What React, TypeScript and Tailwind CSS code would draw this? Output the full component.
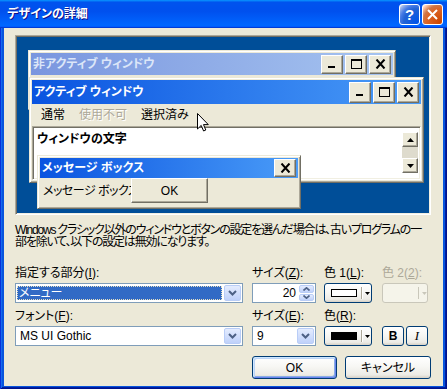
const FONT = "[font-family:'Liberation_Sans','Noto_Sans_CJK_JP',sans-serif] [font-feature-settings:'palt']";

// classic 3d edges used inside the preview
const raised =
  "bg-[#ECE9D8] border border-t-white border-l-white border-r-[#716F64] border-b-[#716F64] shadow-[inset_-1px_-1px_#ACA899]";
const frame =
  "bg-[#ECE9D8] p-[2px] border border-t-[#ECE9D8] border-l-[#ECE9D8] border-r-[#716F64] border-b-[#716F64] shadow-[inset_1px_1px_#FFFFFF,inset_-1px_-1px_#ACA899]";
const sunken =
  "border border-t-[#ACA899] border-l-[#ACA899] border-r-white border-b-white shadow-[inset_1px_1px_#716F64,inset_-1px_-1px_#F1EFE2]";

// luna controls
const xpButton =
  "rounded-[3px] border border-[#003C74] bg-[linear-gradient(to_bottom,#FFFFFF_0%,#F7F7F4_45%,#ECEBE6_85%,#D6D0C5_100%)]";
const xpDefault =
  "shadow-[inset_1px_1px_#CEE7FF,inset_-1px_-1px_#6982EE,inset_2px_2px_#BCD4F6,inset_-2px_-2px_#89ADE4]";

const MinGlyph = () => (
  <svg width="11" height="10" viewBox="0 0 11 10">
    <rect x="1" y="7" width="7" height="2" fill="#000" />
  </svg>
);

const MaxGlyph = () => (
  <svg width="11" height="10" viewBox="0 0 11 10">
    <rect x="0.5" y="0.5" width="10" height="9" fill="none" stroke="#000" />
    <rect x="0" y="0" width="11" height="2" fill="#000" />
  </svg>
);

const CloseGlyph = () => (
  <svg width="11" height="10" viewBox="0 0 11 10">
    <path d="M1.5 0.5 L9.5 9.5 M9.5 0.5 L1.5 9.5" stroke="#000" strokeWidth="2" />
  </svg>
);

const ArrowUp = () => (
  <svg width="7" height="4" viewBox="0 0 7 4">
    <path d="M3.5 0 L7 4 L0 4 Z" fill="#000" />
  </svg>
);

const ArrowDown = () => (
  <svg width="7" height="4" viewBox="0 0 7 4">
    <path d="M0 0 L7 0 L3.5 4 Z" fill="#000" />
  </svg>
);

const Chevron = ({ up = false, small = false }: { up?: boolean; small?: boolean }) =>
  small ? (
    <svg width="7" height="4" viewBox="0 0 7 4">
      <path d={up ? "M0.5 3.5 L3.5 0.8 L6.5 3.5" : "M0.5 0.5 L3.5 3.2 L6.5 0.5"} stroke="#4D6185" strokeWidth="1.6" fill="none" />
    </svg>
  ) : (
    <svg width="9" height="6" viewBox="0 0 9 6">
      <path d="M1 1 L4.5 4.5 L8 1" stroke="#4D6185" strokeWidth="2" fill="none" />
    </svg>
  );

const DropButton = () => (
  <div className="w-[17px] rounded-[2px] border border-[#B9CDF7] bg-[linear-gradient(to_bottom,#E4ECFE,#BFD1FA)] flex items-center justify-center">
    <Chevron />
  </div>
);

const ColorButton = ({ swatch, disabled = false }: { swatch?: string; disabled?: boolean }) =>
  disabled ? (
    <div className="h-[20px] rounded-[3px] border border-[#C9C7BA] bg-[#F5F4EA] flex items-center pl-[6px]">
      <div className="w-[26px]" />
      <div className="ml-[4px] h-[12px] w-px bg-[#C9C7BA]" />
      <svg className="ml-[3px]" width="5" height="3" viewBox="0 0 5 3">
        <path d="M0 0 L5 0 L2.5 3 Z" fill="#C9C7BA" />
      </svg>
    </div>
  ) : (
    <div className={`h-[20px] ${xpButton} flex items-center pl-[6px]`}>
      <div className={`w-[26px] h-[8px] border border-black ${swatch}`} />
      <div className="ml-[4px] h-[12px] w-px bg-[#ACA899] shadow-[1px_0_white]" />
      <svg className="ml-[3px]" width="5" height="3" viewBox="0 0 5 3">
        <path d="M0 0 L5 0 L2.5 3 Z" fill="#000" />
      </svg>
    </div>
  );

const Cursor = () => (
  <svg width="12" height="19" viewBox="0 0 12 19">
    <path
      d="M0.5 0.5 L0.5 16 L4.2 12.4 L6.6 18 L8.8 17 L6.5 11.6 L11.3 11.6 Z"
      fill="#fff"
      stroke="#000"
      strokeWidth="1"
      strokeLinejoin="miter"
    />
  </svg>
);

const Preview = () => (
  <div className={`relative h-[180px] shrink-0 overflow-hidden bg-[#004E98] ${sunken}`}>
    {/* inactive window */}
    <div className={`absolute left-[12px] top-[14px] w-[368px] h-[60px] ${frame}`}>
      <div className="h-[22px] flex items-center px-[2px] bg-[linear-gradient(to_right,#7A96DF,#A6C4F0)]">
        <span className="font-bold text-[#DCE6F8]">非アクティブ ウィンドウ</span>
        <div className="ml-auto flex gap-[2px]">
          <div className={`w-[22px] h-[19px] flex items-center justify-center ${raised}`}>
            <MinGlyph />
          </div>
          <div className={`w-[22px] h-[19px] flex items-center justify-center ${raised}`}>
            <MaxGlyph />
          </div>
          <div className={`w-[22px] h-[19px] flex items-center justify-center ${raised}`}>
            <CloseGlyph />
          </div>
        </div>
      </div>
    </div>

    {/* active window */}
    <div className={`absolute left-[13px] top-[41px] w-[395px] h-[106px] flex flex-col ${frame}`}>
      <div className="h-[24px] shrink-0 flex items-center px-[2px] bg-[linear-gradient(to_right,#0A54E0,#4A9CF8)]">
        <span className="font-bold text-white">アクティブ ウィンドウ</span>
        <div className="ml-auto flex gap-[2px]">
          <div className={`w-[22px] h-[21px] flex items-center justify-center ${raised}`}>
            <MinGlyph />
          </div>
          <div className={`w-[22px] h-[21px] flex items-center justify-center ${raised}`}>
            <MaxGlyph />
          </div>
          <div className={`w-[22px] h-[21px] flex items-center justify-center ${raised}`}>
            <CloseGlyph />
          </div>
        </div>
      </div>
      <div className="h-[22px] shrink-0 flex items-center pl-[2px]">
        <span className="px-[7px]">通常</span>
        <span className="px-[7px] text-[#ACA899] [text-shadow:1px_1px_#FFFFFF]">使用不可</span>
        <span className="px-[7px]">選択済み</span>
      </div>
      <div className={`flex-1 flex bg-white ${sunken}`}>
        <div className="flex-1 pl-[4px] pt-[6px] font-bold">ウィンドウの文字</div>
        <div className="w-[16px] mr-[2px] pt-[5px] flex flex-col">
          <div className={`h-[15px] flex items-center justify-center ${raised}`}>
            <ArrowUp />
          </div>
          <div className="h-[11px] bg-[#DEDBCD]" />
          <div className={`h-[15px] flex items-center justify-center ${raised}`}>
            <ArrowDown />
          </div>
        </div>
      </div>
    </div>

    {/* message box */}
    <div className={`absolute left-[21px] top-[119px] w-[264px] h-[54px] flex flex-col ${frame}`}>
      <div className="h-[20px] shrink-0 flex items-center px-[2px] bg-[linear-gradient(to_right,#0A54E0,#4A9CF8)]">
        <span className="font-bold text-white">メッセージ ボックス</span>
        <div className={`ml-auto w-[22px] h-[18px] flex items-center justify-center ${raised}`}>
          <CloseGlyph />
        </div>
      </div>
      <div className="relative flex-1">
        <div className="pl-[3px] pt-[7px] whitespace-nowrap tracking-[-0.5px]">メッセージ ボックスの文字</div>
        <div className={`absolute left-[91px] top-0 w-[77px] h-[25px] flex items-center justify-center ${raised}`}>
          OK
        </div>
      </div>
    </div>

    <div className="absolute left-[181px] top-[77px]">
      <Cursor />
    </div>
  </div>
);

const TitleBar = () => (
  <div className="h-[28px] shrink-0 flex items-center pl-[7px] pr-[4px] bg-[linear-gradient(to_bottom,#0997FF_0%,#0053EE_8%,#0050EE_40%,#0066FF_88%,#0066FF_93%,#005BFF_95%,#003DD7_96%,#003DD7_100%)]">
    <span className="text-white font-bold text-[12px] [text-shadow:1px_1px_#0F1089]">デザインの詳細</span>
    <div className="ml-auto flex gap-[2px]">
      <div className="w-[21px] h-[21px] rounded-[3px] border border-white bg-[radial-gradient(circle_at_90%_90%,#0054E9_0%,#2263D5_55%,#4479E4_70%,#A3BBEC_90%,#FFFFFF_100%)] flex items-center justify-center text-white font-bold text-[15px] leading-none [font-family:'Liberation_Sans',sans-serif]">
        ?
      </div>
      <div className="w-[21px] h-[21px] rounded-[3px] border border-white bg-[radial-gradient(circle_at_90%_90%,#CC4600_0%,#DC6527_55%,#CD7546_70%,#FFCCB2_90%,#FFFFFF_100%)] flex items-center justify-center">
        <svg width="11" height="11" viewBox="0 0 11 11">
          <path d="M1 1 L10 10 M10 1 L1 10" stroke="#fff" strokeWidth="2" />
        </svg>
      </div>
    </div>
  </div>
);

export default function App() {
  return (
    <div
      className={`w-[447px] h-[389px] flex flex-col bg-[#0855DD] shadow-[inset_1px_1px_#0831D9,inset_-1px_-1px_#00138C,inset_2px_2px_#166AEE,inset_-2px_-2px_#001EA0] ${FONT} text-[12px] leading-[12px] text-black`}
    >
      <TitleBar />
      <div className="flex-1 mx-[4px] mb-[3px] bg-[#ECE9D8] flex flex-col pl-[11px] pr-[12px] pt-[7px]">
        <Preview />

        <p className="mt-[9px] whitespace-nowrap tracking-[-1.2px]">
          Windows クラシック以外のウィンドウとボタンの設定を選んだ場合は、古いプログラムの一
          <br />
          部を除いて、以下の設定は無効になります。
        </p>

        {/* row 1 */}
        <div className="mt-[19px] flex">
          <div className="w-[228px] flex flex-col gap-[4px]">
            <span>
              指定する部分(<u>I</u>):
            </span>
            <div className="h-[20px] flex bg-white border border-[#7F9DB9] p-[1px]">
              <div className="flex-1 mr-[2px] my-[1px] bg-[#316AC5] border border-dotted border-[#E6E0C0] text-white flex items-center pl-[1px]">
                メニュー
              </div>
              <DropButton />
            </div>
          </div>
          <div className="ml-[9px] w-[64px] flex flex-col gap-[4px]">
            <span>
              サイズ(<u>Z</u>):
            </span>
            <div className="h-[20px] flex bg-white border border-[#7F9DB9] p-[1px]">
              <div className="flex-1 flex items-center justify-end pr-[3px]">20</div>
              <div className="w-[15px] flex flex-col gap-px">
                <div className="flex-1 rounded-[2px] border border-[#B9CDF7] bg-[linear-gradient(to_bottom,#E4ECFE,#BFD1FA)] flex items-center justify-center">
                  <Chevron up small />
                </div>
                <div className="flex-1 rounded-[2px] border border-[#B9CDF7] bg-[linear-gradient(to_bottom,#E4ECFE,#BFD1FA)] flex items-center justify-center">
                  <Chevron small />
                </div>
              </div>
            </div>
          </div>
          <div className="ml-[8px] w-[48px] flex flex-col gap-[4px]">
            <span>
              色 1(<u>L</u>):
            </span>
            <ColorButton swatch="bg-white" />
          </div>
          <div className="ml-[10px] w-[46px] flex flex-col gap-[4px]">
            <span className="text-[#ACA899]">
              色 2(<u>2</u>):
            </span>
            <ColorButton disabled />
          </div>
        </div>

        {/* row 2 */}
        <div className="mt-[7px] flex items-end">
          <div className="w-[228px] flex flex-col gap-[4px]">
            <span>
              フォント(<u>F</u>):
            </span>
            <div className="h-[20px] flex bg-white border border-[#7F9DB9] p-[1px]">
              <div className="flex-1 flex items-center pl-[3px]">MS UI Gothic</div>
              <DropButton />
            </div>
          </div>
          <div className="ml-[9px] w-[64px] flex flex-col gap-[4px]">
            <span>
              サイズ(<u>E</u>):
            </span>
            <div className="h-[20px] flex bg-white border border-[#7F9DB9] p-[1px]">
              <div className="flex-1 flex items-center pl-[3px]">9</div>
              <DropButton />
            </div>
          </div>
          <div className="ml-[8px] w-[48px] flex flex-col gap-[4px]">
            <span>
              色(<u>R</u>):
            </span>
            <ColorButton swatch="bg-black" />
          </div>
          <div className="ml-[10px] w-[46px] flex gap-[2px]">
            <div className={`w-[22px] h-[20px] ${xpButton} flex items-center justify-center font-bold`}>B</div>
            <div className={`w-[22px] h-[20px] ${xpButton} flex items-center justify-center italic text-[13px] [font-family:'Liberation_Serif',serif]`}>
              I
            </div>
          </div>
        </div>

        <div className="mt-[10px] flex justify-end gap-[8px]">
          <div className={`w-[85px] h-[23px] ${xpButton} ${xpDefault} flex items-center justify-center`}>OK</div>
          <div className={`w-[86px] h-[23px] ${xpButton} flex items-center justify-center`}>キャンセル</div>
        </div>
      </div>
    </div>
  );
}
